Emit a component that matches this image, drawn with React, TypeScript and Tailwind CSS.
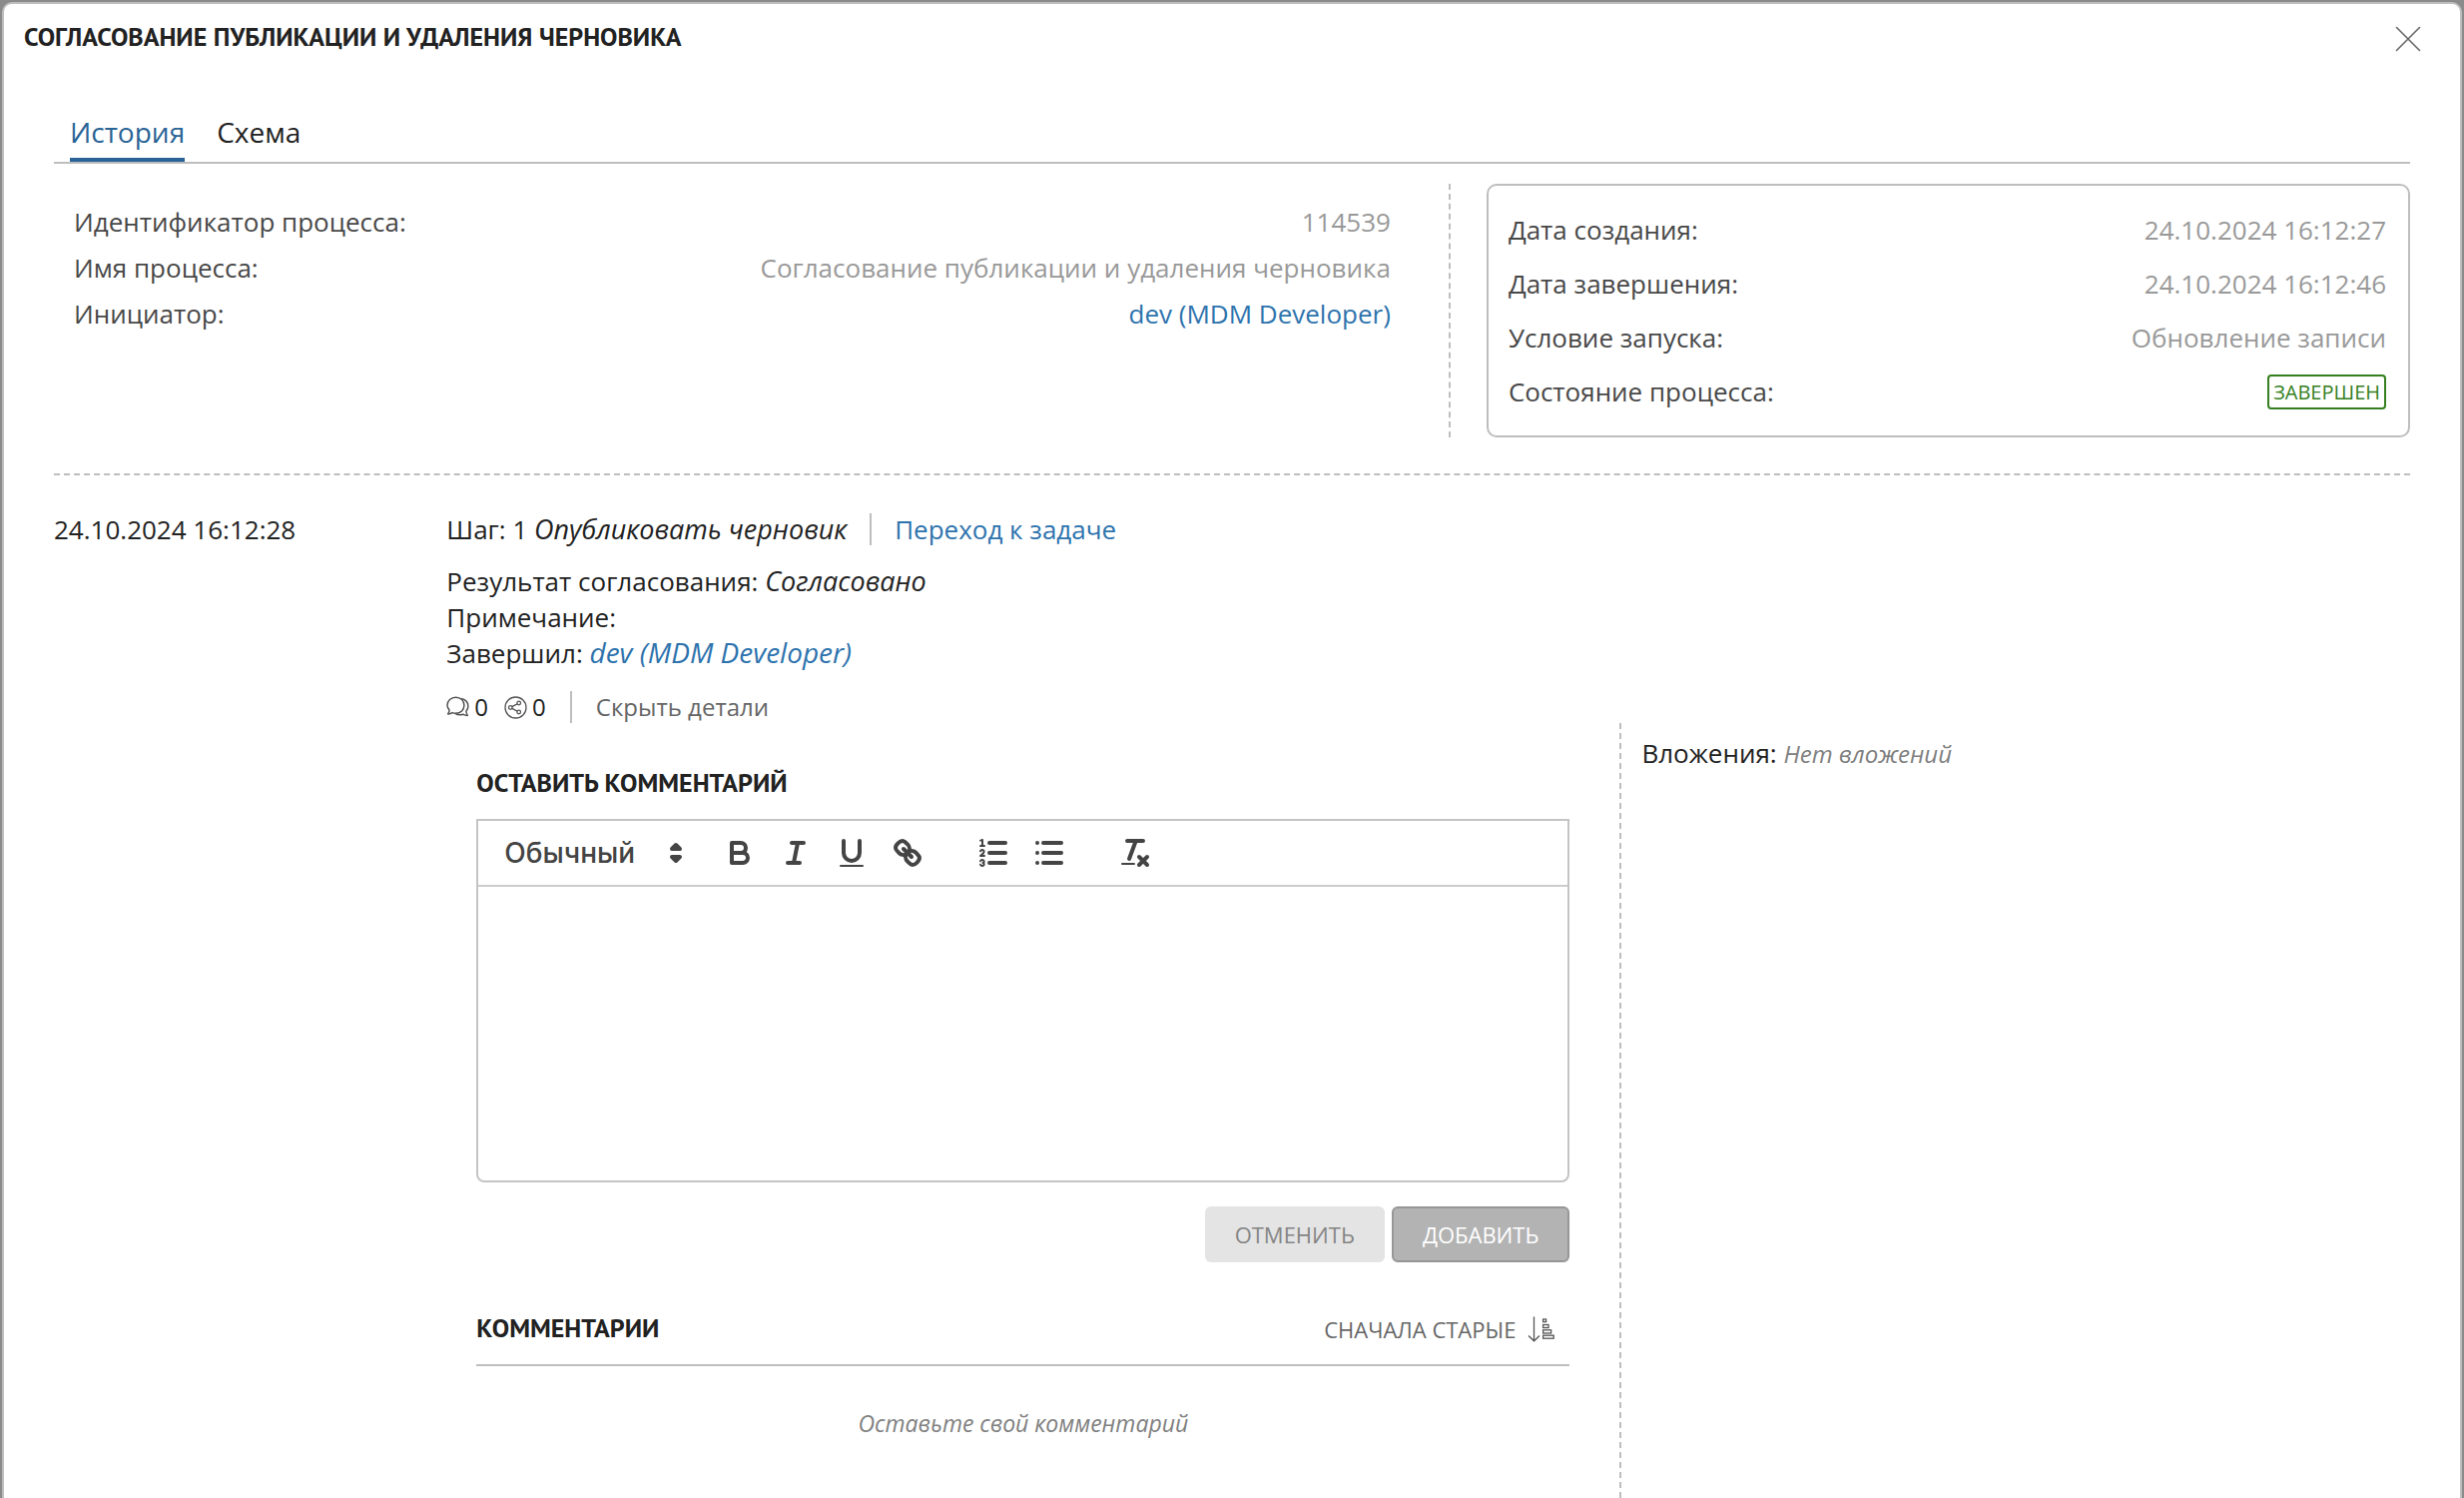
import type { ReactNode } from "react";

const BODY = 'font-["Open_Sans","Noto_Sans",sans-serif]';
const HEADING = 'font-["PT_Sans","Noto_Sans",sans-serif] text-[26px] leading-[38px] font-bold text-[#222]';

function CloseIcon() {
  return (
    <svg className="size-[26px]" viewBox="0 0 26 26" fill="none" stroke="#666" strokeWidth="1.6" strokeLinecap="round" aria-hidden="true">
      <path d="M1.5 1.5l23 23M24.5 1.5l-23 23" />
    </svg>
  );
}

function CommentsIcon() {
  return (
    <svg className="h-[22px] w-[23px]" viewBox="0 0 23 22" fill="none" stroke="#555" strokeWidth="1.5" strokeLinejoin="round" aria-hidden="true">
      <path d="M9.6 1.2c4.9 0 8.3 3.6 8.3 8 0 4.5-3.5 8.1-8.3 8.1-1.3 0-2.5-.2-3.5-.7-1 .8-2.700 1.400-4.500 1.300.9-1.100 1.500-2.700 1.500-4C1.800 12.500 1 10.900 1 9.200c0-4.400 3.800-8 8.600-8z" />
      <path d="M15.2 2.600c3.800.9 6.700 3.800 6.700 7.600 0 1.700-.7 3.400-1.900 4.700-.1 1.500.4 3.400 1.300 4.600-1.800 0-3.500-.5-4.700-1.300-2.500 1-5.500.7-7.700-.9" />
    </svg>
  );
}

function ShareIcon() {
  return (
    <svg className="size-[23px]" viewBox="0 0 23 23" fill="none" stroke="#555" strokeWidth="1.3" aria-hidden="true">
      <circle cx="11.5" cy="11.5" r="10.5" />
      <circle cx="6.3" cy="11.5" r="1.8" />
      <circle cx="14.7" cy="7" r="1.8" />
      <circle cx="14.7" cy="16" r="1.8" />
      <path d="M7.9 10.600l5.200-2.700M7.900 12.400l5.200 2.700" />
    </svg>
  );
}

function SortIcon() {
  return (
    <svg className="h-[26px] w-[27px]" viewBox="0 0 27 26" fill="none" stroke="#555" strokeWidth="1.3" aria-hidden="true">
      <path d="M6.5 0.5v24M1 19.500l5.500 5.300 5.500-5.300" />
      <rect x="15.6" y="3" width="3" height="2.600" />
      <rect x="15.6" y="8.5" width="5.400" height="3" />
      <rect x="15.6" y="13.800" width="8" height="3.200" />
      <rect x="15.6" y="19.200" width="10.600" height="3" />
    </svg>
  );
}

function EditorIcon({ children }: { children: ReactNode }) {
  return (
    <svg className="size-9" viewBox="0 0 18 18" fill="none" stroke="#444" strokeWidth="2" strokeLinecap="round" strokeLinejoin="round" aria-hidden="true">
      {children}
    </svg>
  );
}

function ToolButton({ label, children }: { label: string; children: ReactNode }) {
  return (
    <button type="button" aria-label={label} className="flex h-12 w-14 items-center justify-center">
      <EditorIcon>{children}</EditorIcon>
    </button>
  );
}

function Toolbar() {
  return (
    <div className="flex h-[66px] items-center border-b-2 border-[#ccc] pl-[18px]">
      <div className="relative mr-[14px] flex items-center">
        <select
          aria-label="Стиль текста"
          className='h-12 w-[202px] appearance-none bg-transparent pl-2 font-["Inter","Liberation_Sans",sans-serif] text-[28px] leading-[48px] font-medium text-[#444]'
        >
          <option>Обычный</option>
        </select>
        <span className="pointer-events-none absolute right-1">
          <EditorIcon>
            <polygon fill="#444" points="7 11 9 13 11 11" />
            <polygon fill="#444" points="7 7 9 5 11 7" />
          </EditorIcon>
        </span>
      </div>
      <div className="flex">
        <ToolButton label="Полужирный">
          <path d="M5,4H9.5A2.5,2.5,0,0,1,12,6.5v0A2.5,2.5,0,0,1,9.5,9H5Z" />
          <path d="M5,9h5.5A2.5,2.5,0,0,1,13,11.5v0A2.5,2.5,0,0,1,10.5,14H5Z" />
        </ToolButton>
        <ToolButton label="Курсив">
          <path d="M7,4H13M5,14H11M8,14L10,4" />
        </ToolButton>
        <ToolButton label="Подчёркнутый">
          <path d="M5,3V9a4.012,4.012,0,0,0,4,4H9a4.012,4.012,0,0,0,4-4V3" />
          <rect fill="#444" stroke="none" height="1" rx="0.5" width="12" x="3" y="15" />
        </ToolButton>
        <ToolButton label="Ссылка">
          <path d="M7,7L11,11" />
          <path d="M8.9,4.577a3.476,3.476,0,0,1,.36,4.679A3.476,3.476,0,0,1,4.577,8.9C3.185,7.5,2.035,6.4,4.217,4.217S7.5,3.185,8.9,4.577Z" />
          <path d="M13.423,9.1a3.476,3.476,0,0,0-4.679-.36,3.476,3.476,0,0,0,.36,4.679c1.392,1.392,2.5,2.542,4.679.36S14.815,10.5,13.423,9.1Z" />
        </ToolButton>
      </div>
      <div className="ml-[30px] flex">
        <ToolButton label="Нумерованный список">
          <path d="M7,4H15M7,9H15M7,14H15" />
          <path strokeWidth="1" d="M2.5,5.5H4.5" />
          <path fill="#444" stroke="none" d="M3.5,6A0.5,0.5,0,0,1,3,5.5V3.085l-0.276.138A0.5,0.5,0,0,1,2.053,3c-0.124-.247-0.023-0.324.224-0.447l1-.5A0.5,0.5,0,0,1,4,2.5v3A0.5,0.5,0,0,1,3.5,6Z" />
          <path strokeWidth="1" d="M4.5,10.5h-2c0-.234,1.85-1.076,1.85-2.234A0.959,0.959,0,0,0,2.5,8.156" />
          <path strokeWidth="1" d="M2.5,14.846a0.959,0.959,0,0,0,1.85-.109A0.7,0.7,0,0,0,3.75,14a0.688,0.688,0,0,0,.6-0.736,0.959,0.959,0,0,0-1.85-.109" />
        </ToolButton>
        <ToolButton label="Маркированный список">
          <path d="M6,4H15M6,9H15M6,14H15M3,4H3M3,9H3M3,14H3" />
        </ToolButton>
      </div>
      <div className="ml-[30px] flex">
        <ToolButton label="Очистить форматирование">
          <path d="M5,3H13M6,12L9.35,3M11,11L15,15M15,11L11,15" />
          <rect fill="#444" stroke="none" height="1" rx="0.5" width="7" x="2" y="14" />
        </ToolButton>
      </div>
    </div>
  );
}

function Row({ label, lineClass, children }: { label: string; lineClass: string; children: ReactNode }) {
  return (
    <div className={`flex items-center justify-between ${lineClass}`}>
      <dt className="text-[#484848]">{label}</dt>
      <dd className="text-[#999]">{children}</dd>
    </div>
  );
}

export default function App() {
  return (
    <div className={`flex min-h-screen flex-col bg-[#8b8b8b] px-0.5 pt-0.5 text-[26px] leading-9 text-[#222] ${BODY}`}>
      <section role="dialog" aria-labelledby="dialog-title" className="flex flex-1 flex-col rounded-t-[10px] border-2 border-b-0 border-[#bebebe] bg-white">
        <header className="flex items-start justify-between pt-[14px] pr-[31px] pl-5">
          <h1 id="dialog-title" className={HEADING}>СОГЛАСОВАНИЕ ПУБЛИКАЦИИ И УДАЛЕНИЯ ЧЕРНОВИКА</h1>
          <button type="button" aria-label="Закрыть" className="flex size-[42px] items-center justify-center">
            <CloseIcon />
          </button>
        </header>

        <div className="mt-[52px] flex flex-1 flex-col px-[50px]">
          <nav role="tablist" className="flex gap-8 border-b-2 border-[#bebebe] pl-4 text-[28px] leading-10">
            <button type="button" role="tab" aria-selected="true" className="border-b-4 border-[#2a6496] pb-1.5 text-[#2a6496]">История</button>
            <button type="button" role="tab" aria-selected="false" className="border-b-4 border-transparent pb-1.5">Схема</button>
          </nav>

          <div className="mt-5 flex">
            <dl className="flex-1 border-r-2 border-dashed border-[#bebebe] pt-[15px] pr-[58px] pl-5">
              <Row label="Идентификатор процесса:" lineClass="leading-[46px]">114539</Row>
              <Row label="Имя процесса:" lineClass="leading-[46px]">Согласование публикации и удаления черновика</Row>
              <Row label="Инициатор:" lineClass="leading-[46px]">
                <a href="#initiator" className="text-[#2e73ad]">dev (MDM Developer)</a>
              </Row>
            </dl>
            <dl className="ml-9 w-[39.2%] rounded-[10px] border-2 border-[#bebebe] pt-[17px] pr-[22px] pb-[17px] pl-5">
              <Row label="Дата создания:" lineClass="leading-[54px]">24.10.2024 16:12:27</Row>
              <Row label="Дата завершения:" lineClass="leading-[54px]">24.10.2024 16:12:46</Row>
              <Row label="Условие запуска:" lineClass="leading-[54px]">Обновление записи</Row>
              <div className="flex h-[54px] items-center justify-between">
                <dt className="text-[#484848]">Состояние процесса:</dt>
                <dd className="rounded-[4px] border-2 border-[#347f1e] px-1 text-xl leading-[31px] text-[#347f1e]">ЗАВЕРШЕН</dd>
              </div>
            </dl>
          </div>

          <div className="mt-9 grid flex-1 grid-cols-6 border-t-2 border-dashed border-[#bebebe] pt-9">
            <time>24.10.2024 16:12:28</time>
            <div className="col-span-5 flex flex-col">
              <div className="flex items-center">
                <p>Шаг: 1 <em className="text-[27px] leading-none">Опубликовать черновик</em></p>
                <span className="mx-[23px] h-8 w-0.5 bg-[#bebebe]" />
                <a href="#task" className="text-[#2e73ad]">Переход к задаче</a>
              </div>
              <div className="mt-4">
                <p>Результат согласования: <em className="text-[27px] leading-none">Согласовано</em></p>
                <p>Примечание:</p>
                <p>Завершил: <a href="#user" className="text-[28px] leading-none text-[#2e73ad] italic">dev (MDM Developer)</a></p>
              </div>
              <div className="mt-5 flex h-8 items-center text-2xl">
                <span className="flex items-center gap-[5px]"><CommentsIcon />0</span>
                <span className="ml-4 flex items-center gap-[5px]"><ShareIcon />0</span>
                <span className="mx-6 h-8 w-0.5 bg-[#bebebe]" />
                <button type="button" className="text-[#666]">Скрыть детали</button>
              </div>

              <div className="flex flex-1">
                <div className="w-[59.75%] pt-[41px] pr-[50px] pl-[30px]">
                  <h2 className={HEADING}>ОСТАВИТЬ КОММЕНТАРИЙ</h2>
                  <div className="mt-[17px] rounded-b-lg border-2 border-[#c4c4c4]">
                    <Toolbar />
                    <textarea aria-label="Текст комментария" className="block h-[294px] w-full resize-none px-6 py-4 outline-none" />
                  </div>
                  <div className="mt-6 flex justify-end gap-[7px] text-[22px]">
                    <button type="button" className="h-14 rounded-md bg-[#e4e4e4] px-[30px] text-[#858585]">ОТМЕНИТЬ</button>
                    <button type="button" className="h-14 rounded-md border-2 border-[#969696] bg-[#b3b3b3] px-[29px] text-white">ДОБАВИТЬ</button>
                  </div>
                  <div className="mt-[47px] flex items-start justify-between border-b-2 border-[#bebebe] pb-[15px]">
                    <h2 className={HEADING}>КОММЕНТАРИИ</h2>
                    <button type="button" className="mr-[15px] flex items-center gap-3 text-[22px] leading-10 text-[#666]">
                      СНАЧАЛА СТАРЫЕ
                      <SortIcon />
                    </button>
                  </div>
                  <p className="mt-[39px] text-center text-[23px] leading-9 text-[#808080] italic">Оставьте свой комментарий</p>
                </div>
                <div className="flex-1 border-l-2 border-dashed border-[#bebebe] pt-3 pl-5">
                  <p>Вложения: <em className="text-2xl leading-none text-[#808080]">Нет вложений</em></p>
                </div>
              </div>
            </div>
          </div>
        </div>
      </section>
    </div>
  );
}
